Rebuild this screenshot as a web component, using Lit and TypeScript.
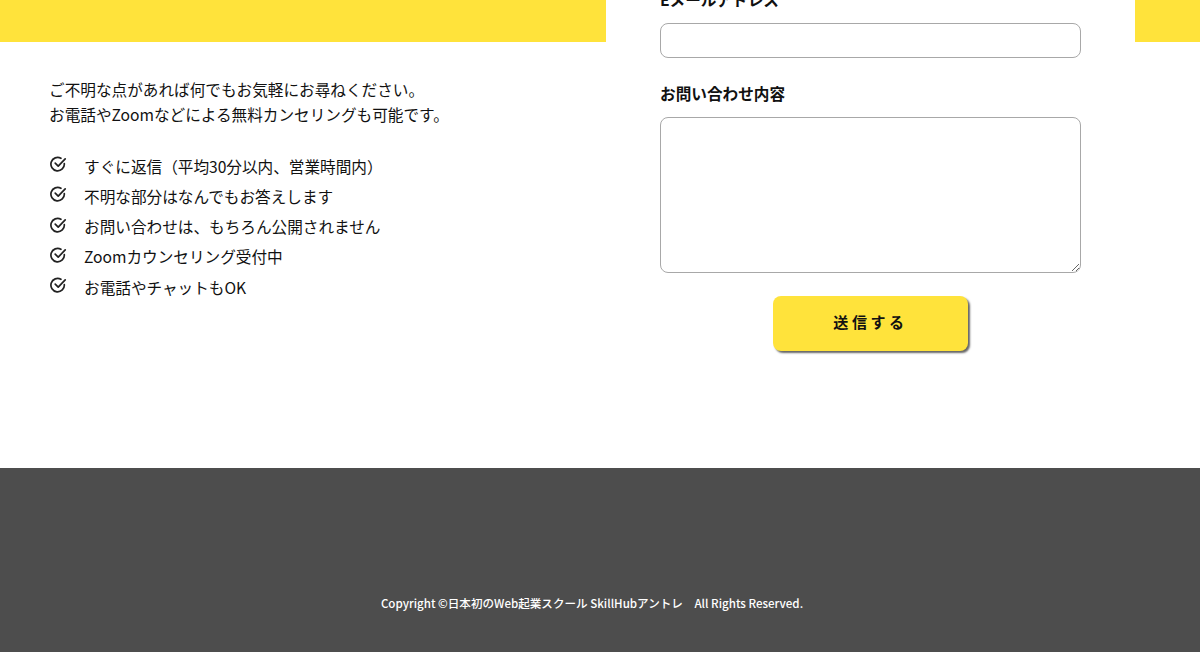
import { LitElement, html, css } from "lit";
import { customElement } from "lit/decorators.js";

const items = [
  "すぐに返信（平均30分以内、営業時間内）",
  "不明な部分はなんでもお答えします",
  "お問い合わせは、もちろん公開されません",
  "Zoomカウンセリング受付中",
  "お電話やチャットもOK",
];

@customElement("app-root")
export class AppRoot extends LitElement {
  static styles = css`
    :host {
      display: block;
      height: 652px;
      overflow: hidden;
      font-family: "Noto Sans CJK JP", "Noto Sans", sans-serif;
      color: #111;
      background: #fff;
    }
    .page { height: 468px; position: relative; }
    .band { height: 42px; background: #ffe33b; }
    .columns { display: flex; height: 100%; margin-top: -42px; }
    .info { width: 606px; box-sizing: border-box; padding: 77px 0 0 49px; }
    .lead { margin: 0 0 24.6px; font-size: 15.64px; line-height: 25px; }
    ul { list-style: none; margin: 0; padding: 0; }
    li { display: flex; height: 30.3px; align-items: flex-start; font-size: 15.64px; line-height: 30px; }
    li svg { width: 17px; height: 17px; margin: 4.6px 17px 0 1px; flex: none; }
    .card {
      width: 529px; height: 42px; box-sizing: border-box;
      padding: 0 54px; background: #fff; position: relative;
    }
    .form { display: flex; flex-direction: column; align-items: flex-start; }
    label { display: block; font-size: 15.64px; font-weight: 700; line-height: 24px; color: #111; }
    .email-label { margin-top: -12px; margin-bottom: 11px; }
    .input {
      width: 421px; height: 35px; box-sizing: border-box;
      border: 1px solid #a8a8a8; border-radius: 8px; background: #fff; display: block;
      padding: 0; margin: 0; outline: none;
    }
    .msg-label { margin-top: 24px; margin-bottom: 11px; }
    textarea.input { height: 156px; resize: vertical; }
    button {
      align-self: center; width: 195px; height: 55px; margin-top: 23px;
      padding: 0 0 4px;
      background: #ffe33b; border: 0; border-radius: 8px;
      box-shadow: 2px 2px 2px #666;
      font: 700 15px "Noto Sans CJK JP", sans-serif; letter-spacing: 0.24em; color: #111;
    }
    footer {
      height: 184px; background: #4d4d4d; color: #fff; box-sizing: border-box;
      padding-top: 126px; font-size: 11.57px; font-weight: 500; line-height: 19px; text-align: center;
      padding-right: 16px;
    }
  `;

  render() {
    const check = html`<svg viewBox="0 0 17 17" fill="none" stroke="#222" stroke-width="1.7" stroke-linecap="round" stroke-linejoin="round">
      <path d="M14.3 7.6 A6.7 6.7 0 1 1 10.9 2.3" />
      <path d="M5.2 7.2 L8.2 10.2 L15.2 2.8" />
    </svg>`;
    return html`
      <div class="page">
        <div class="band"></div>
        <div class="columns">
          <section class="info">
            <p class="lead">ご不明な点があれば何でもお気軽にお尋ねください。<br />お電話やZoomなどによる無料カンセリングも可能です。</p>
            <ul>${items.map((t) => html`<li>${check}<span>${t}</span></li>`)}</ul>
          </section>
          <section class="card">
            <div class="form">
              <label class="email-label">Eメールアドレス</label>
              <input class="input" type="text" />
              <label class="msg-label">お問い合わせ内容</label>
              <textarea class="input"></textarea>
              <button type="button">送信する</button>
            </div>
          </section>
        </div>
      </div>
      <footer>Copyright ©日本初のWeb起業スクール SkillHubアントレ　All Rights Reserved.</footer>
    `;
  }
}
